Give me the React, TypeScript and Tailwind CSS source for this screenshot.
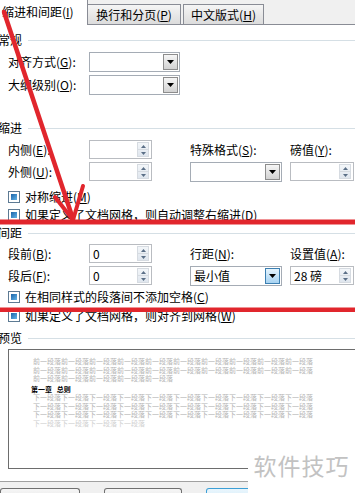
import React from "react";

const Mn = ({ c }: { c: string }) => (
  <span>
    (<span className="underline underline-offset-1">{c}</span>)
  </span>
);

const Tri = ({ color = "#000" }: { color?: string }) => (
  <svg width="7" height="4" viewBox="0 0 7 4">
    <path d="M0 0 H7 L3.5 4 Z" fill={color} />
  </svg>
);

const SelectBox = ({ w, text, active }: { w: string; text?: string; active?: boolean }) => (
  <div className={`flex h-[20px] border border-[#a5acb5] bg-white ${w}`}>
    <div className="flex flex-1 items-center pl-[3px]">{text}</div>
    <div
      className={
        active
          ? "my-[1px] mr-[1px] flex w-[15px] items-center justify-center border border-[#3c7fb1] bg-gradient-to-b from-[#e5f4fd] to-[#a7d3f2]"
          : "my-[1px] mr-[1px] flex w-[15px] items-center justify-center border border-[#8d8d8d] bg-gradient-to-b from-[#f6f6f6] to-[#d2d2d2]"
      }
    >
      <Tri />
    </div>
  </div>
);

const Spin = ({ w, text }: { w: string; text?: string }) => (
  <div className={`flex h-[19px] border border-[#b9bcc1] bg-white ${w}`}>
    <div className="flex flex-1 items-center pl-[3px]">{text}</div>
    <div className="my-[1px] mr-[2px] flex w-[12px] flex-col border border-[#d6dbe1] bg-gradient-to-b from-[#f3f6f9] to-[#dfe6ee]">
      <div className="flex flex-1 items-center justify-center border-b border-[#d6dbe1]">
        <svg width="5" height="3" viewBox="0 0 5 3">
          <path d="M0 3 H5 L2.5 0 Z" fill="#5b6f87" />
        </svg>
      </div>
      <div className="flex flex-1 items-center justify-center">
        <svg width="5" height="3" viewBox="0 0 5 3">
          <path d="M0 0 H5 L2.5 3 Z" fill="#5b6f87" />
        </svg>
      </div>
    </div>
  </div>
);

const Check = ({ children, mt }: { children: React.ReactNode; mt: string }) => (
  <div className={`flex h-[16px] items-center pl-[8px] ${mt}`}>
    <div className="h-[12px] w-[12px] border border-[#5d7a93] bg-white p-[2px]">
      <div className="h-full w-full bg-gradient-to-br from-[#1b64a8] to-[#62b4e8]" />
    </div>
    <span className="ml-[5px] whitespace-nowrap">{children}</span>
  </div>
);

const Header = ({ text, mt }: { text: string; mt: string }) => (
  <div className={`flex h-[16px] items-center ${mt}`}>
    <span className="ml-[-2px] whitespace-nowrap">{text}</span>
    <div className="ml-[6px] h-px flex-1 bg-[#d5dfe5]" />
  </div>
);

const Label = ({ children, w = "w-[81px]" }: { children: React.ReactNode; w?: string }) => (
  <div className={`flex items-center whitespace-nowrap ${w}`}>{children}</div>
);

export default function App() {
  const prev = "前一段落".repeat(10);
  const next = "下一段落".repeat(10);
  return (
    <div className="relative h-[493px] w-[355px] overflow-hidden bg-white font-['Noto_Sans_CJK_SC','Noto_Sans',sans-serif] text-[12px] leading-none text-black">
      {/* tabs */}
      <div className="flex h-[25px] items-end border-b border-[#898c95] bg-[#f0f0f0]">
        <div className="relative -mb-px flex h-[26px] w-[88px] items-center border-r border-[#898c95] bg-white pl-[2px]">
          <span className="whitespace-nowrap">
            缩进和间距<Mn c="I" />
          </span>
        </div>
        <div className="flex h-[20px] w-[93px] items-center justify-center border-t border-r border-[#898c95] bg-gradient-to-b from-[#f5f5f5] to-[#dcdcdc]">
          <span className="whitespace-nowrap">
            换行和分页<Mn c="P" />
          </span>
        </div>
        <div className="ml-[2px] flex h-[20px] w-[81px] items-center justify-center border-t border-r border-l border-[#898c95] bg-gradient-to-b from-[#f5f5f5] to-[#dcdcdc]">
          <span className="whitespace-nowrap">
            中文版式<Mn c="H" />
          </span>
        </div>
      </div>

      {/* 常规 */}
      <Header text="常规" mt="mt-[7px]" />
      <div className="mt-[4px] flex pl-[8px]">
        <Label>
          对齐方式<Mn c="G" />:
        </Label>
        <SelectBox w="w-[91px]" />
      </div>
      <div className="mt-[3px] flex pl-[8px]">
        <Label>
          大纲级别<Mn c="O" />:
        </Label>
        <SelectBox w="w-[91px]" />
      </div>

      {/* 缩进 */}
      <Header text="缩进" mt="mt-[25px]" />
      <div className="mt-[4px] flex pl-[8px]">
        <div className="flex w-[182px] flex-col gap-[3px]">
          <div className="flex">
            <Label>
              内侧<Mn c="E" />:
            </Label>
            <Spin w="w-[63px]" />
          </div>
          <div className="flex">
            <Label>
              外侧<Mn c="U" />:
            </Label>
            <Spin w="w-[63px]" />
          </div>
        </div>
        <div className="flex w-[100px] flex-col gap-[3px]">
          <div className="flex h-[19px] items-center whitespace-nowrap">
            特殊格式<Mn c="S" />:
          </div>
          <SelectBox w="w-[92px]" />
        </div>
        <div className="flex w-[65px] flex-col gap-[3px]">
          <div className="flex h-[19px] items-center whitespace-nowrap">
            磅值<Mn c="Y" />:
          </div>
          <Spin w="w-[64px]" />
        </div>
      </div>
      <Check mt="mt-[7px]">
        对称缩进<Mn c="M" />
      </Check>
      <Check mt="mt-[2px]">
        如果定义了文档网格，则自动调整右缩进<Mn c="D" />
      </Check>

      {/* 间距 */}
      <Header text="间距" mt="mt-[2px]" />
      <div className="mt-[3px] flex pl-[8px]">
        <div className="flex w-[182px] flex-col gap-[3px]">
          <div className="flex">
            <Label>
              段前<Mn c="B" />:
            </Label>
            <Spin w="w-[63px]" text="0" />
          </div>
          <div className="flex">
            <Label>
              段后<Mn c="F" />:
            </Label>
            <Spin w="w-[63px]" text="0" />
          </div>
        </div>
        <div className="flex w-[100px] flex-col gap-[3px]">
          <div className="flex h-[19px] items-center whitespace-nowrap">
            行距<Mn c="N" />:
          </div>
          <SelectBox w="w-[92px]" text="最小值" active />
        </div>
        <div className="flex w-[65px] flex-col gap-[3px]">
          <div className="flex h-[19px] items-center whitespace-nowrap">
            设置值<Mn c="A" />:
          </div>
          <Spin w="w-[64px]" text="28 磅" />
        </div>
      </div>
      <Check mt="mt-[3px]">
        在相同样式的段落间不添加空格<Mn c="C" />
      </Check>
      <Check mt="mt-[3px]">
        如果定义了文档网格，则对齐到网格<Mn c="W" />
      </Check>

      {/* 预览 */}
      <Header text="预览" mt="mt-[6px]" />
      <div className="ml-[8px] mt-[3px] h-[120px] w-[360px] border border-[#6d6d6d] bg-white pl-[24px] pt-[7px] text-[7px] leading-[8.5px] text-[#b4b4b4]">
        <div className="whitespace-nowrap">{prev}</div>
        <div className="whitespace-nowrap">{prev}</div>
        <div className="whitespace-nowrap">{"前一段落".repeat(5)}</div>
        <div className="ml-[-2px] mt-[2px] whitespace-nowrap font-bold text-black">第一章&nbsp;&nbsp;&nbsp;总则</div>
        <div className="whitespace-nowrap">{next}</div>
        <div className="whitespace-nowrap">{next}</div>
        <div className="whitespace-nowrap">{next}</div>
        <div className="whitespace-nowrap text-[#cfcfcf]">{"下一段落".repeat(4)}</div>
      </div>

      {/* bottom buttons */}
      <div className="mt-[12px] h-[20px] border-t border-[#a0a0a0] bg-[#f0f0f0] pt-[6px]">
        <div className="flex">
          <div className="h-[14px] w-[80px] rounded-t-[3px] border border-b-0 border-[#707070] bg-gradient-to-b from-[#f6f6f6] to-[#e4e4e4]" />
          <div className="ml-[24px] h-[14px] w-[78px] rounded-t-[3px] border border-b-0 border-[#707070] bg-gradient-to-b from-[#f6f6f6] to-[#e4e4e4]" />
          <div className="ml-[24px] h-[14px] w-[60px] rounded-t-[3px] border border-b-0 border-[#3c9fd6] bg-gradient-to-b from-[#eaf6fd] to-[#d2ebf9]" />
        </div>
      </div>

      {/* watermark */}
      <div className="absolute bottom-0 right-0 flex h-[42px] w-[107px] items-start justify-center bg-white pt-[3px] text-[23px] leading-none tracking-[1px] text-[#c2c2c2]">
        软件技巧
      </div>

      {/* red annotations */}
      <svg className="pointer-events-none absolute inset-0" width="355" height="493" viewBox="0 0 355 493">
        <g stroke="#e1262d" fill="none" strokeLinecap="round">
          <line x1="4" y1="12" x2="73" y2="219" strokeWidth="4.5" />
          <line x1="55" y1="197" x2="73" y2="220" strokeWidth="4" />
          <line x1="83" y1="186" x2="73" y2="220" strokeWidth="4" />
        </g>
        <rect x="0" y="219.5" width="355" height="5" fill="#e1262d" />
        <rect x="0" y="307.5" width="355" height="4.5" fill="#e1262d" />
      </svg>
    </div>
  );
}
